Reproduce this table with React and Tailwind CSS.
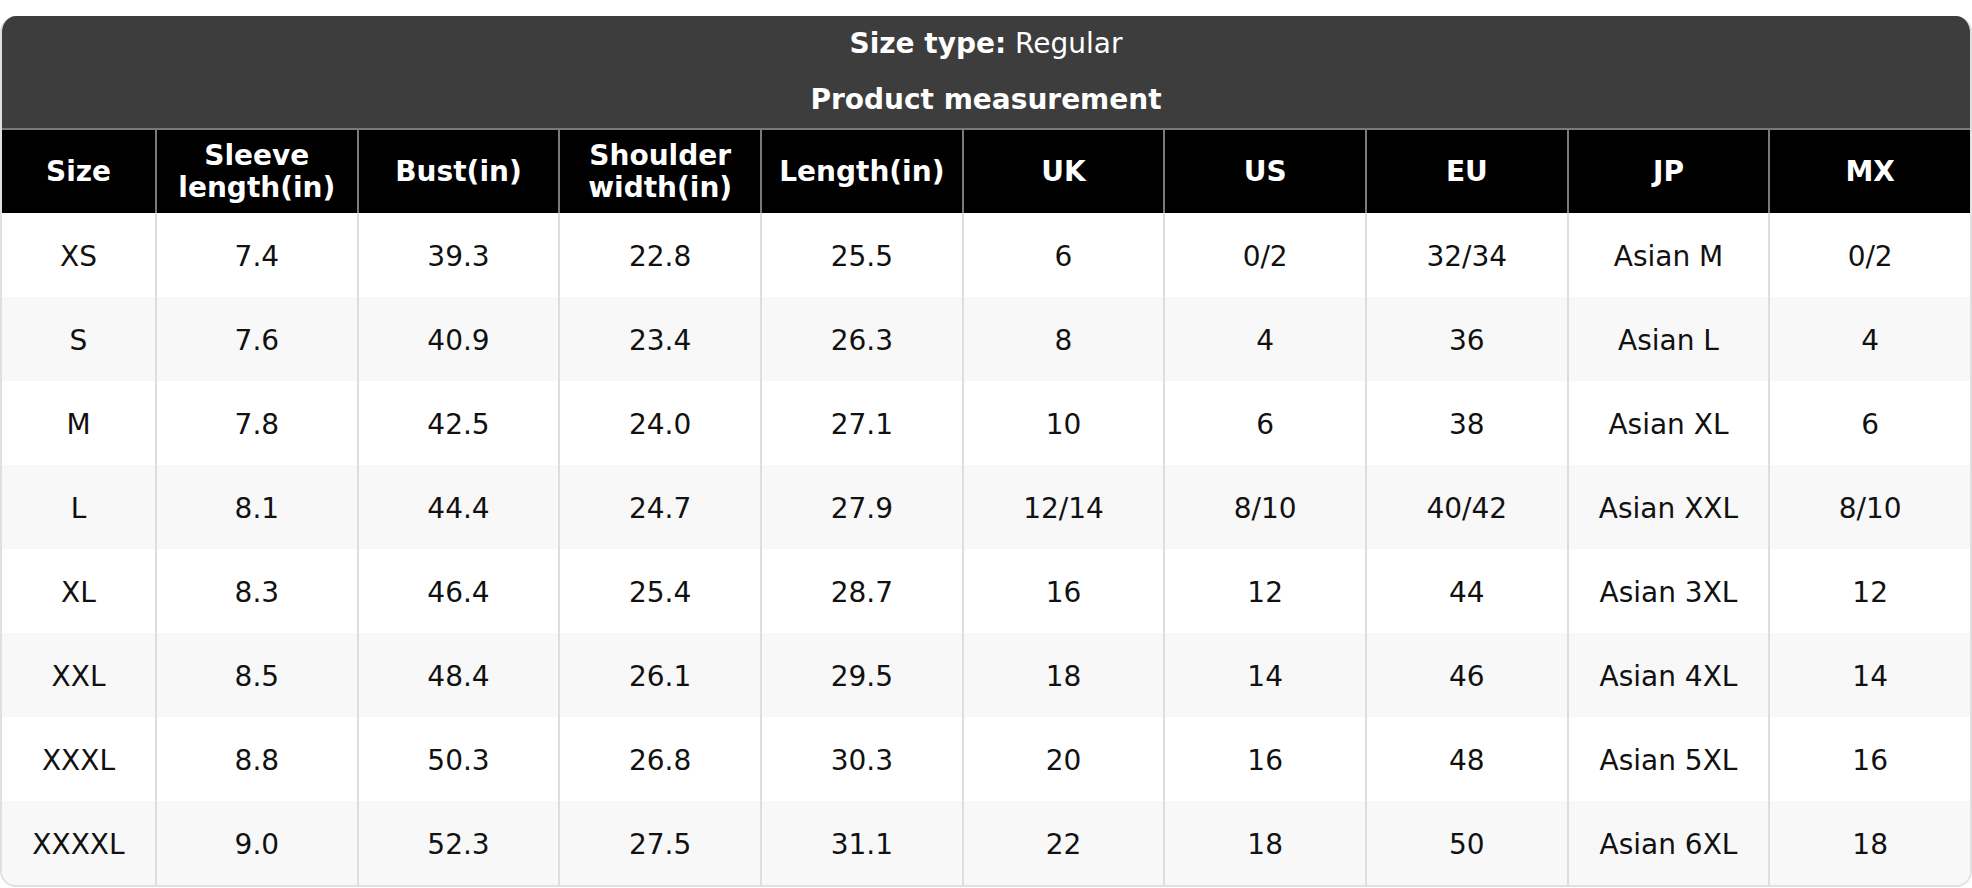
const columns = ['Size', 'Sleeve length(in)', 'Bust(in)', 'Shoulder width(in)', 'Length(in)', 'UK', 'US', 'EU', 'JP', 'MX']

const rows = [
  ['XS', '7.4', '39.3', '22.8', '25.5', '6', '0/2', '32/34', 'Asian M', '0/2'],
  ['S', '7.6', '40.9', '23.4', '26.3', '8', '4', '36', 'Asian L', '4'],
  ['M', '7.8', '42.5', '24.0', '27.1', '10', '6', '38', 'Asian XL', '6'],
  ['L', '8.1', '44.4', '24.7', '27.9', '12/14', '8/10', '40/42', 'Asian XXL', '8/10'],
  ['XL', '8.3', '46.4', '25.4', '28.7', '16', '12', '44', 'Asian 3XL', '12'],
  ['XXL', '8.5', '48.4', '26.1', '29.5', '18', '14', '46', 'Asian 4XL', '14'],
  ['XXXL', '8.8', '50.3', '26.8', '30.3', '20', '16', '48', 'Asian 5XL', '16'],
  ['XXXXL', '9.0', '52.3', '27.5', '31.1', '22', '18', '50', 'Asian 6XL', '18'],
]

export default function App() {
  return (
    <div className="min-h-screen bg-white pt-4" style={{ fontFamily: '"DejaVu Sans", Verdana, sans-serif' }}>
      <div className="rounded-[16px] overflow-hidden border-x-2 border-b-2 border-[#e0e0e0] bg-white">
        <div className="bg-[#3d3d3d] text-white text-center text-[28px]">
          <div className="h-[54px] pt-[2px] flex items-center justify-center">
            <span className="font-bold">Size type:</span>&nbsp;Regular
          </div>
          <div className="h-[58px] pt-[2px] flex items-center justify-center font-bold">Product measurement</div>
        </div>
        <div className="grid grid-cols-[153px_repeat(9,1fr)] bg-black border-t-2 border-[#7a7a7a] h-[85px]">
          {columns.map((c, i) => (
            <div key={c}
              className={`flex items-center justify-center text-center text-white font-bold text-[28px] leading-[32px] px-2 ${i > 0 ? 'border-l-2 border-[#7a7a7a]' : ''}`}>
              {c}
            </div>
          ))}
        </div>
        {rows.map((r, ri) => (
          <div key={r[0]} className={`grid grid-cols-[153px_repeat(9,1fr)] h-[84px] ${ri % 2 ? 'bg-[#f8f8f8]' : 'bg-white'}`}>
            {r.map((v, i) => (
              <div key={i}
                className={`flex items-center justify-center pt-[4px] text-[28px] text-[#111] ${i > 0 ? 'border-l-2 border-[#dedede]' : ''}`}>
                {v}
              </div>
            ))}
          </div>
        ))}
      </div>
    </div>
  )
}
